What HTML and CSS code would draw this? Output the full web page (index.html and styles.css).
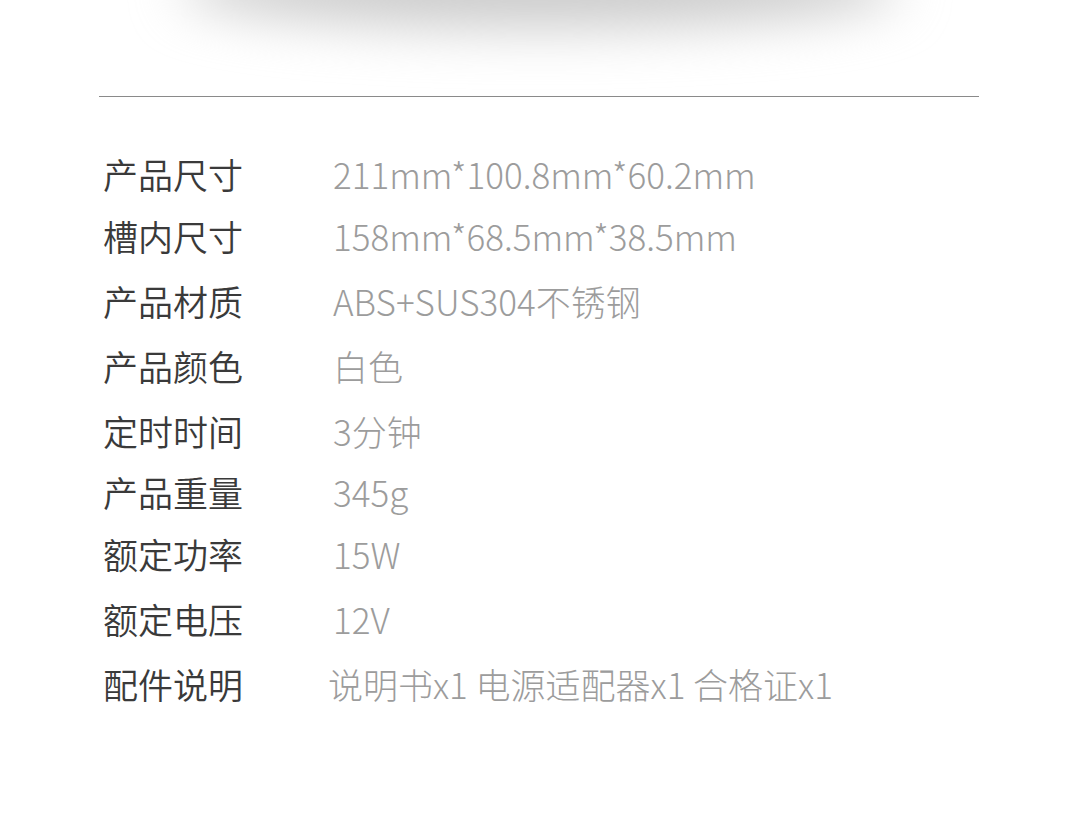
FILE: index.html
```html
<!DOCTYPE html>
<html lang="zh-CN">
<head>
<meta charset="UTF-8" />
<meta name="viewport" content="width=device-width, initial-scale=1.0">
<title>产品参数</title>
<link rel="stylesheet" href="styles.css">
</head>
<body>
<div class="top-shadow"></div>
<div class="divider"></div>

<div class="specs">
<div class="row"><span class="label">产品尺寸</span><span class="value">211mm*100.8mm*60.2mm</span></div>
<div class="row"><span class="label">槽内尺寸</span><span class="value">158mm*68.5mm*38.5mm</span></div>
<div class="row"><span class="label">产品材质</span><span class="value">ABS+SUS304不锈钢</span></div>
<div class="row"><span class="label">产品颜色</span><span class="value">白色</span></div>
<div class="row"><span class="label">定时时间</span><span class="value">3分钟</span></div>
<div class="row"><span class="label">产品重量</span><span class="value">345g</span></div>
<div class="row"><span class="label">额定功率</span><span class="value">15W</span></div>
<div class="row"><span class="label">额定电压</span><span class="value">12V</span></div>
<div class="row"><span class="label">配件说明</span><span class="value value-cjk">说明书x1 电源适配器x1 合格证x1</span></div>
</div>
</body>
</html>
```

FILE: styles.css
```css
body {
margin: 0;
width: 1080px;
height: 824px;
background: #fff;
font-family: "Noto Sans CJK SC", "Noto Sans", sans-serif;
overflow: hidden;
}

.top-shadow {
position: relative;
height: 96px;
overflow: hidden;
}

.top-shadow::before {
content: "";
position: absolute;
top: -52px;
left: 180px;
width: 720px;
height: 80px;
border-radius: 50%;
background: #cbcbcb;
filter: blur(26px);
}

.divider {
height: 1px;
margin: 0 101px 0 99px;
background: #8a8a8a;
}

.specs {
display: grid;
grid-template-rows: 62px 63px 66px 65px 64px 59px 64px 67px 62px;
margin-top: 45px;
padding-left: 103px;
}

.row {
display: flex;
align-items: center;
font-size: 35px;
line-height: 1;
}

.label {
width: 230px;
color: #3a3a3a;
font-weight: 350;
}

.value {
color: #9c9c9c;
font-weight: 200;
}

.value-cjk {
margin-left: -5px;
}
```
